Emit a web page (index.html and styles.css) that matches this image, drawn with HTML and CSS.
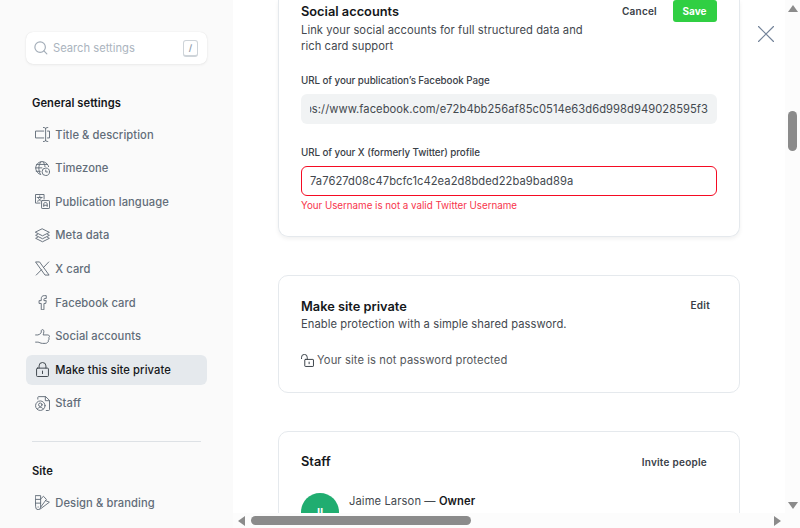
FILE: index.html
```html
<!DOCTYPE html>
<html lang="en">
<head>
<meta charset="utf-8">
<title>Settings</title>
<link rel="stylesheet" href="styles.css">
</head>
<body>
<div class="app">
  <aside class="sidebar">
    <div class="search">
      <svg class="search-icon" viewBox="0 0 24 24"><circle cx="10.5" cy="10.5" r="9"/><path d="M17 17l5 5"/></svg>
      <span class="search-text">Search settings</span>
      <kbd class="key">/</kbd>
    </div>
    <h2 class="group">General settings</h2>
    <nav class="menu">
      <a class="item"><svg viewBox="0 0 24 24"><path d="M14 17.5H.8v-11H14M20 6.5h3.2v11H20M17 2v20M13.5.8c2 0 3.5.5 3.5 2 0-1.500 1.500-2 3.500-2M13.500 23.200c2 0 3.500-.5 3.500-2 0 1.500 1.500 2 3.500 2"/></svg><span>Title &amp; description</span></a>
      <a class="item"><svg viewBox="0 0 24 24"><circle cx="17.250" cy="17.250" r="6"/><path d="M17.250 14.500v3h2.700M8.500 21.500A10.500 10.500 0 1 1 21.800 9M1 11h10M2.500 5.500h17.500M2 16.500h6.500M9.500 1C5 7 5 15.500 9 21.500M12.500 1c2 2.200 3.200 5 3.500 8"/></svg><span>Timezone</span></a>
      <a class="item"><svg viewBox="0 0 24 24"><path d="M8 14.500H.8V.8h13.700V8M7.600 3v2.500M3.500 5.500h8M10 5.500c-.5 3-3 5-6 6M5 5.500c.6 3 3 5 5 6"/><rect x="10.500" y="10.500" width="12.700" height="12.700" rx="1"/><path d="M14 20v-4.500c0-2.500 5.500-2.500 5.500 0V20M14 18h5.500"/></svg><span>Publication language</span></a>
      <a class="item"><svg viewBox="0 0 24 24"><path d="M12 1.500l11 5.500-11 5.500L1 7zM4 10.200L1 11.700l11 5.500 11-5.500-3-1.500M4 15L1 16.500 12 22l11-5.500-3-1.500"/></svg><span>Meta data</span></a>
      <a class="item"><svg viewBox="0 0 24 24"><path d="M1.500 1.500h5.800l15.200 21h-5.800zM22 1.500L13.500 10.500M10.500 13.800L2 22.500"/></svg><span>X card</span></a>
      <a class="item"><svg viewBox="0 0 24 24"><path d="M10 23v-9.500H6.500V9H10V6c0-3.500 2-5 4.800-5H18v4.500h-2.200c-1 0-1.500.5-1.500 1.500v2H18l-.8 4.500h-2.900V23z"/></svg><span>Facebook card</span></a>
      <a class="item"><svg viewBox="0 0 24 24"><path d="M1 9.500h3.500C8 8.500 9.800 7 10 5V3c0-2.700 4.200-2.700 4.200.5C14.200 6 13.500 8 13 9.500h7.500c3.200 0 3.500 4 1.200 4.500 1.600 1.500.8 3.700-.6 4 .8 1.700.2 3-.8 3.200C19.500 22.500 18 23 16.500 23H12c-3.500 0-5-2-7.500-2H1"/></svg><span>Social accounts</span></a>
      <a class="item active"><svg viewBox="0 0 24 24"><rect x="2.500" y="9.800" width="19" height="13.400" rx="1.500"/><path d="M6.500 9.500V6.300a5.500 5.500 0 0 1 11 0v3.200M12 14.500v4"/></svg><span>Make this site private</span></a>
      <a class="item"><svg viewBox="0 0 24 24"><circle cx="8.500" cy="15.500" r="7.600"/><circle cx="8.500" cy="14" r="2.800"/><path d="M4 21c.5-4 8.500-4 9 0M4.500 5V2.300C4.500 1.500 5 1 5.800 1H17l6.200 6v14.500c0 1-.5 1.700-1.500 1.700H18M16.500 1v6.500h6.500"/></svg><span>Staff</span></a>
    </nav>
    <hr class="rule">
    <h2 class="group">Site</h2>
    <nav class="menu">
      <a class="item"><svg viewBox="0 0 24 24"><path d="M1 1h8v18.500a4 4 0 0 1-8 0zM1 7h8M1 13h8M5 19v.5M9 6.500l4.500-4.500 4.700 5L9 19.500M17 9l6 2.500L9 22"/></svg><span>Design &amp; branding</span></a>
    </nav>
  </aside>

  <main class="content">
    <section class="card editing">
      <header class="head">
        <div>
          <h3 class="title">Social accounts</h3>
          <p class="desc">Link your social accounts for full structured data and<br>rich card support</p>
        </div>
        <div class="actions"><button class="btn cancel">Cancel</button><button class="btn save">Save</button></div>
      </header>
      <label class="label fb">URL of your publication’s Facebook Page</label>
      <div class="input filled"><div class="clip"><span>https://www.facebook.com/e72b4bb256af85c0514e63d6d998d949028595f3</span></div></div>
      <label class="label tw">URL of your X (formerly Twitter) profile</label>
      <div class="input invalid"><span>7a7627d08c47bcfc1c42ea2d8bded22ba9bad89a</span></div>
      <p class="error">Your Username is not a valid Twitter Username</p>
    </section>

    <section class="card private">
      <header class="head">
        <div>
          <h3 class="title">Make site private</h3>
          <p class="desc">Enable protection with a simple shared password.</p>
        </div>
        <button class="btn edit">Edit</button>
      </header>
      <div class="status"><svg viewBox="0 0 24 24"><rect x="7" y="10" width="16" height="13" rx="1"/><path d="M1 8.500V6a5 5 0 0 1 10.500 0v4M15 15v3"/></svg><span>Your site is not password protected</span></div>
    </section>

    <section class="card staff">
      <header class="head">
        <h3 class="title">Staff</h3>
        <button class="btn invite">Invite people</button>
      </header>
      <div class="person"><div class="avatar">JL</div><p class="name">Jaime Larson — <b>Owner</b></p></div>
    </section>
    <svg class="close" viewBox="0 0 16 16"><path d="M.5.5l15 15M15.500.5l-15 15"/></svg>
  </main>

  <div class="vbar"><i class="arrow up"></i><i class="thumb"></i><i class="arrow down"></i></div>
  <div class="hbar"><i class="arrow left"></i><i class="thumb"></i><i class="arrow right"></i></div>
</div>
</body>
</html>
```
FILE: styles.css
```css
* { box-sizing: border-box; }
body { margin: 0; background: #fff; font-family: Inter, "Liberation Sans", sans-serif; color: #15171a; overflow: hidden; }
h2, h3, p { margin: 0; }
svg { fill: none; stroke: currentColor; stroke-linecap: round; stroke-linejoin: round; flex: none; }
span, h2, h3, p, button, label { white-space: nowrap; }

.app { display: grid; grid-template: 513px 15px / 233px 552px 15px; width: 800px; height: 528px; overflow: hidden; }

.sidebar { grid-row: 1 / 3; background: #fafafa; padding: 32px 26px 0; overflow: hidden; }
.search { display: flex; align-items: center; width: 181px; height: 32px; padding: 0 9px 0 8px; background: #fff; border-radius: 7px; box-shadow: 0 0 1px rgba(0,0,0,.12), 0 1px 3px rgba(0,0,0,.06); color: #abb4be; }
.search-icon { width: 14px; height: 14px; stroke-width: 2; color: #a3adb8; }
.search-text { flex: 1; margin-left: 5px; font-size: 11.200px; line-height: 16px; }
.key { display: flex; align-items: center; justify-content: center; width: 15px; height: 17px; border: 1px solid #ced4d9; border-bottom-width: 2px; border-radius: 3px; font: 600 9px/12px Inter, sans-serif; color: #8e9caa; }
.group { margin: 30px 0 0 6px; font-size: 11.200px; font-weight: 600; line-height: 18px; letter-spacing: .05px; }
.menu { display: flex; flex-direction: column; gap: 3.600px; margin-top: 7.600px; }
.item { display: flex; align-items: center; width: 181px; height: 30px; padding-left: 8.500px; gap: 5.800px; border-radius: 6px; color: #626d79; font-size: 11.200px; font-weight: 500; letter-spacing: .08px; }
.item svg { width: 15px; height: 15px; stroke-width: 1.500; }
.item.active { background: #e5e9ed; color: #15171a; }
.item.active svg { color: #394047; }
.rule { width: 169px; height: 1px; margin: 23px 0 0 6px; border: 0; background: #dde1e5; }
.rule + .group { margin-top: 20px; }

.content { position: relative; overflow: hidden; padding-left: 45px; }
.card { width: 462px; padding: 0 22px; border: 1px solid #e5e9ed; border-radius: 10px; }
.head { display: flex; justify-content: space-between; align-items: flex-start; }
.title { padding: 1px 0; font-size: 12.800px; font-weight: 600; line-height: 16px; }
.desc { font-size: 11.200px; line-height: 16px; color: #44494f; letter-spacing: .07px; }
.btn { padding: 0; border: 0; background: none; color: #394047; font: 600 10px/16px Inter, sans-serif; letter-spacing: .25px; }

.editing { height: 237px; border-top: 0; border-radius: 0 0 10px 10px; box-shadow: 0 2px 4px rgba(0,0,0,.06); }
.editing .title { margin-top: 3px; padding-bottom: 2px; }
.actions { display: flex; gap: 16px; }
.cancel { height: 22px; }
.save { width: 44px; height: 22px; padding-right: 1px; border-radius: 3px; background: #30cf43; color: #fff; font-weight: 700; letter-spacing: 0; }
.label { display: block; font-size: 9.800px; font-weight: 500; line-height: 14px; color: #394047; letter-spacing: -.07px; }
.fb { margin-top: 20px; }
.tw { margin-top: 22px; }
.input { display: flex; align-items: center; height: 30px; margin-top: 6px; padding: 0 9px; border-radius: 6px; font-size: 11.200px; line-height: 16px; color: #44494f; letter-spacing: .05px; }
.filled { background: #f1f3f4; }
.clip { display: flex; justify-content: flex-end; width: 100%; overflow: hidden; }
.invalid { border: 1px solid #f50b23; padding-left: 8px; }
.error { margin-top: 2px; font-size: 9.800px; line-height: 16px; color: #f7354c; letter-spacing: -.02px; }

.private { height: 118px; margin-top: 38px; padding-top: 22px; }
.edit { margin: -1px 7px 0 0; }
.status { display: flex; align-items: center; gap: 3px; height: 16px; margin-top: 20px; font-size: 11.200px; color: #54575b; letter-spacing: .1px; }
.status svg { width: 13px; height: 13px; stroke-width: 1.800; color: #394047; }

.staff { height: 140px; margin-top: 38px; padding-top: 21px; }
.invite { margin: 1px 10px 0 0; }
.person { display: flex; gap: 10px; margin-top: 22px; }
.staff .head { height: 18px; }
.avatar { display: flex; align-items: center; justify-content: center; width: 38px; height: 38px; border-radius: 50%; background: #20ad70; color: #fff; font-size: 12px; font-weight: 600; }
.name { font-size: 11.200px; line-height: 16px; color: #44494f; letter-spacing: .1px; }
.name b { color: #15171a; font-weight: 600; }
.close { position: absolute; left: 525px; top: 26px; width: 16px; height: 16px; stroke-width: 1.200; color: #738399; }

.vbar, .hbar { display: flex; align-items: center; background: #fcfcfc; }
.vbar { flex-direction: column; padding: 5px 0 4px; }
.hbar { grid-column: 2 / 4; padding: 0 19px 0 5px; }
.thumb { background: #8b8b8b; border-radius: 5px; }
.vbar .thumb { width: 9px; height: 40px; margin-top: 99px; }
.hbar .thumb { width: 220px; height: 9px; margin-left: 6px; }
.arrow { width: 0; height: 0; border: 5px solid transparent; }
.up { border-top: 0; border-bottom: 7px solid #8b8b8b; }
.down { border-bottom: 0; border-top: 7px solid #8b8b8b; margin-top: auto; }
.left { border-left: 0; border-right: 7px solid #8b8b8b; }
.right { border-right: 0; border-left: 7px solid #8b8b8b; margin-left: auto; }
```
